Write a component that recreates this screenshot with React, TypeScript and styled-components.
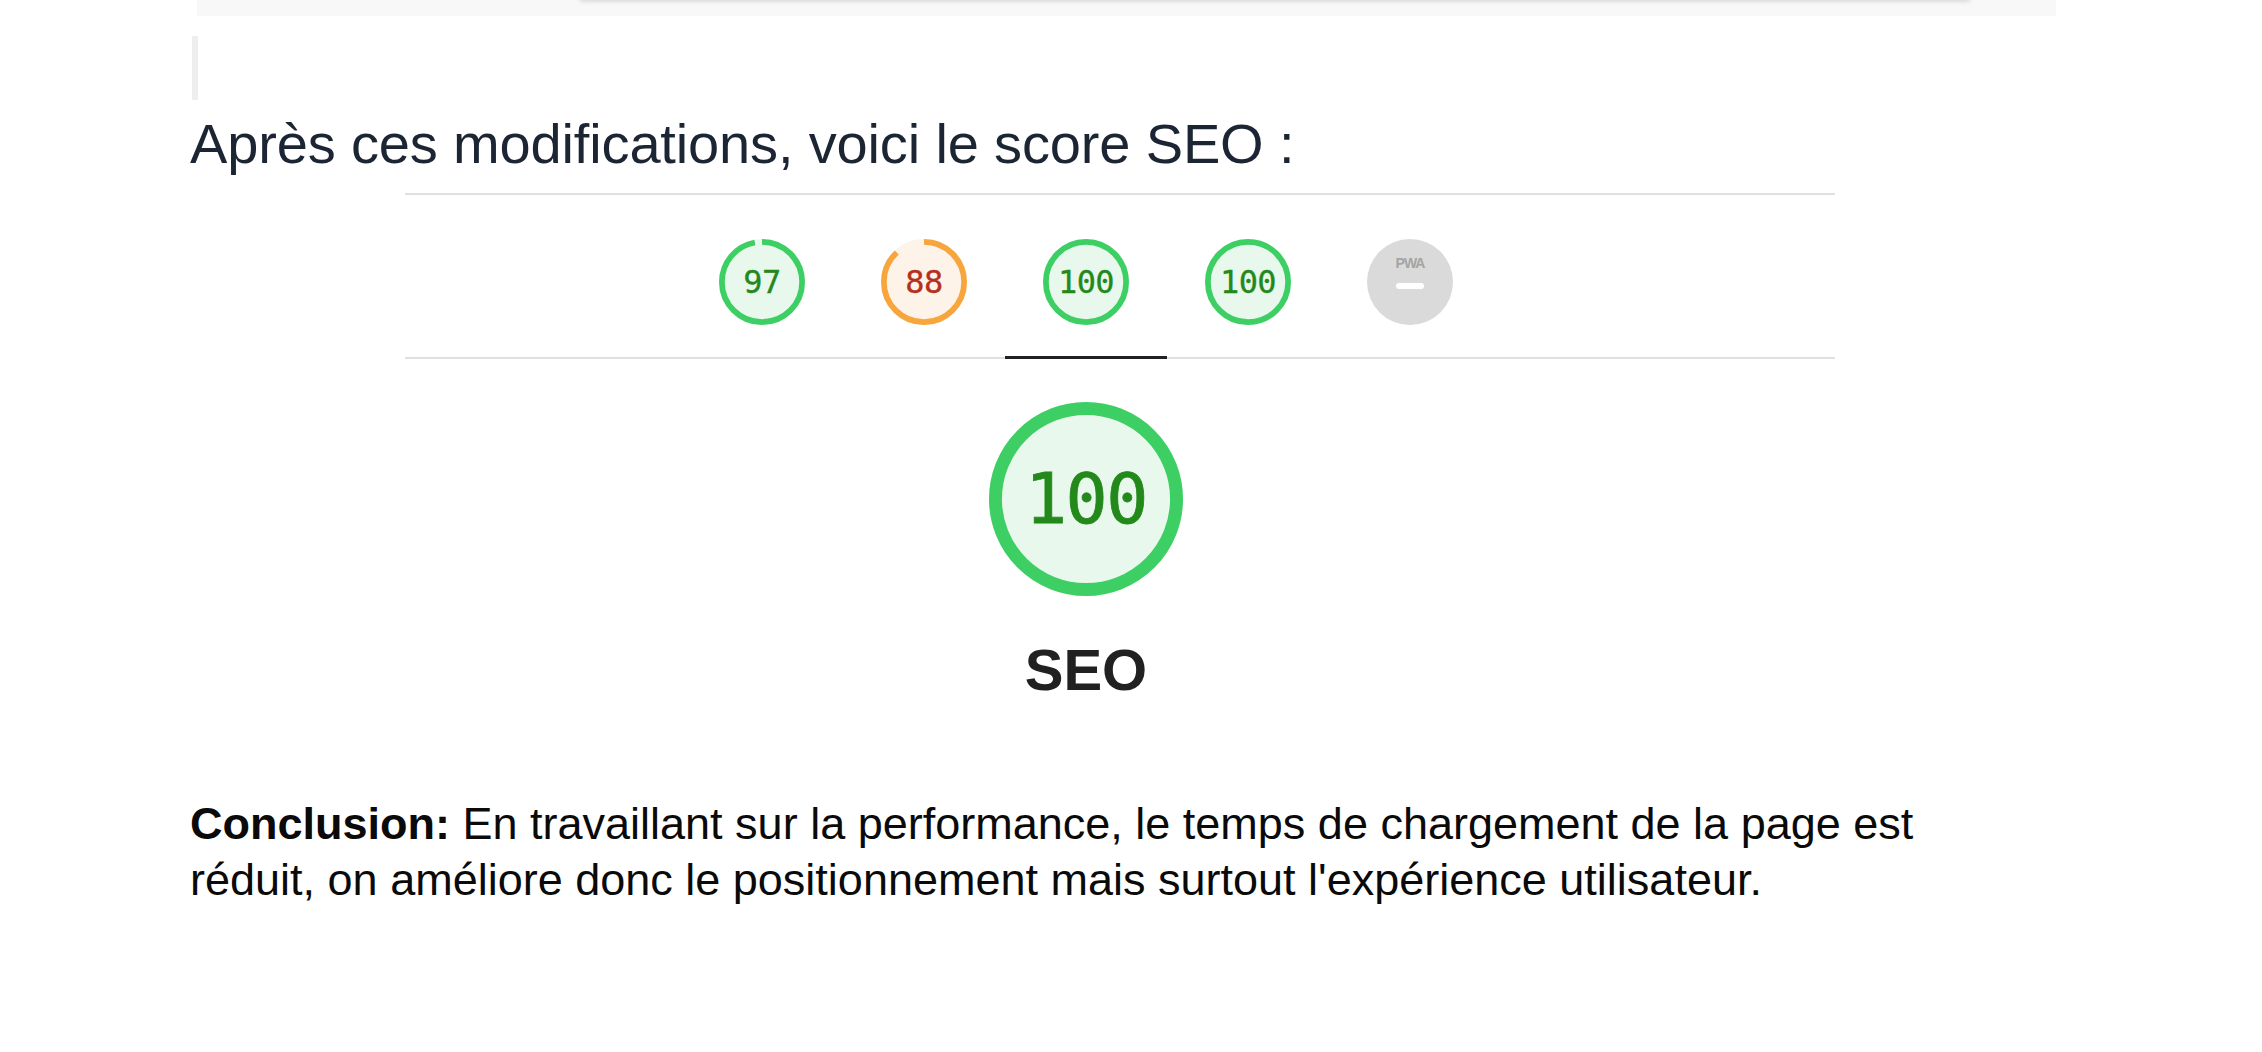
import React from "react";
import styled, { createGlobalStyle } from "styled-components";

const GlobalStyle = createGlobalStyle`
  html, body { margin: 0; padding: 0; background: #ffffff; }
  body { font-family: "Liberation Sans", Arial, Helvetica, sans-serif; }
`;

const Page = styled.div`
  width: 1866px;
  padding-left: 190px;
  display: flex;
  flex-direction: column;
`;

const CodeStrip = styled.div`
  display: flex;
  align-items: flex-start;
  margin-left: 7px;
  height: 16px;
  background: #f8f8f8;
`;

const CardEdge = styled.div`
  margin: -8px 0 0 383px;
  width: 1390px;
  height: 8px;
  background: #ffffff;
  box-shadow: 0 1px 5px rgba(0, 0, 0, 0.16);
`;

const EmptyQuote = styled.div`
  margin: 20px 0 0 2px;
  height: 64px;
  width: 0;
  border-left: 6px solid #eeeeee;
`;

const Heading = styled.p`
  margin: 10px 0 0;
  font-size: 56px;
  line-height: 67px;
  letter-spacing: -0.15px;
  color: #1c2533;
`;

const Report = styled.div`
  margin: 16px 0 0 215px;
  width: 1430px;
  display: flex;
  flex-direction: column;
`;

const TopRule = styled.div`
  height: 2px;
  background: #e0e0e0;
`;

const TabBar = styled.div`
  display: flex;
  justify-content: center;
  padding-right: 68px;
  border-bottom: 2px solid #e0e0e0;
`;

const TabItem = styled.div<{ $active?: boolean }>`
  width: 162px;
  padding: 44px 0 31px;
  margin-bottom: -2px;
  display: flex;
  justify-content: center;
  border-bottom: 3px solid ${(p) => (p.$active ? "#202124" : "transparent")};
`;

const Focus = styled.div`
  display: flex;
  flex-direction: column;
  align-items: center;
  padding-right: 68px;
  padding-top: 43px;
`;

const GaugeWrap = styled.div<{ $size: number }>`
  display: grid;
  width: ${(p) => p.$size}px;
  height: ${(p) => p.$size}px;
  & > * {
    grid-area: 1 / 1;
  }
`;

const GaugeSvg = styled.svg`
  width: 100%;
  height: 100%;
  display: block;
`;

const GaugeValue = styled.div<{ $font: number; $color: string; $stroke: number }>`
  display: flex;
  align-items: center;
  justify-content: center;
  font-family: "DejaVu Sans Mono", Menlo, monospace;
  font-size: ${(p) => p.$font}px;
  color: ${(p) => p.$color};
  -webkit-text-stroke: ${(p) => p.$stroke}px ${(p) => p.$color};
  letter-spacing: -0.02em;
`;

const PwaBadge = styled.div`
  width: 86px;
  height: 86px;
  border-radius: 50%;
  background: #dadada;
  display: flex;
  flex-direction: column;
  align-items: center;
  padding-top: 17px;
  box-sizing: border-box;
`;

const PwaText = styled.span`
  font-family: "Liberation Sans", Arial, sans-serif;
  font-weight: 700;
  font-size: 14px;
  line-height: 14px;
  letter-spacing: -1px;
  color: #a4a4a4;
`;

const PwaDash = styled.span`
  margin-top: 13px;
  width: 28px;
  height: 6px;
  border-radius: 3px;
  background: #ffffff;
`;

const CategoryLabel = styled.div`
  margin-top: 40px;
  font-size: 58px;
  line-height: 67px;
  font-weight: 700;
  color: #212121;
`;

const Conclusion = styled.p`
  margin: 93px 0 0;
  max-width: 1780px;
  font-size: 45px;
  line-height: 56px;
  color: #0a0a0a;
`;

const Lead = styled.strong`
  font-weight: 700;
`;

type Tone = "pass" | "average";

const tones: Record<Tone, { stroke: string; fill: string; text: string }> = {
  pass: { stroke: "#3dcf64", fill: "#e9f8ec", text: "#22891a" },
  average: { stroke: "#f6a63c", fill: "#fdf3e8", text: "#b5301f" },
};

const CIRC = 2 * Math.PI * 56;

function Gauge({ score, size, font, weight }: { score: number; size: number; font: number; weight: number }) {
  const tone = tones[score >= 90 ? "pass" : "average"];
  const dash = (score / 100) * CIRC;
  return (
    <GaugeWrap $size={size}>
      <GaugeSvg viewBox="0 0 120 120">
        <circle cx="60" cy="60" r="56" fill={tone.fill} stroke={tone.fill} strokeWidth="8" />
        <circle
          cx="60"
          cy="60"
          r="56"
          fill="none"
          stroke={tone.stroke}
          strokeWidth="8"
          strokeDasharray={`${dash} ${CIRC}`}
          transform="rotate(-90 60 60)"
        />
      </GaugeSvg>
      <GaugeValue $font={font} $color={tone.text} $stroke={weight}>
        {score}
      </GaugeValue>
    </GaugeWrap>
  );
}

const scores = [97, 88, 100, 100];

export default function App() {
  return (
    <>
      <GlobalStyle />
      <Page>
        <CodeStrip>
          <CardEdge />
        </CodeStrip>
        <EmptyQuote />
        <Heading>Après ces modifications, voici le score SEO :</Heading>
        <Report>
          <TopRule />
          <TabBar>
            {scores.map((s, i) => (
              <TabItem key={i} $active={i === 2}>
                <Gauge score={s} size={86} font={32} weight={0.3} />
              </TabItem>
            ))}
            <TabItem>
              <PwaBadge>
                <PwaText>PWA</PwaText>
                <PwaDash />
              </PwaBadge>
            </TabItem>
          </TabBar>
          <Focus>
            <Gauge score={100} size={194} font={70} weight={0.8} />
            <CategoryLabel>SEO</CategoryLabel>
          </Focus>
        </Report>
        <Conclusion>
          <Lead>Conclusion:</Lead> En travaillant sur la performance, le temps de chargement de la page est réduit, on
          améliore donc le positionnement mais surtout l'expérience utilisateur.
        </Conclusion>
      </Page>
    </>
  );
}
